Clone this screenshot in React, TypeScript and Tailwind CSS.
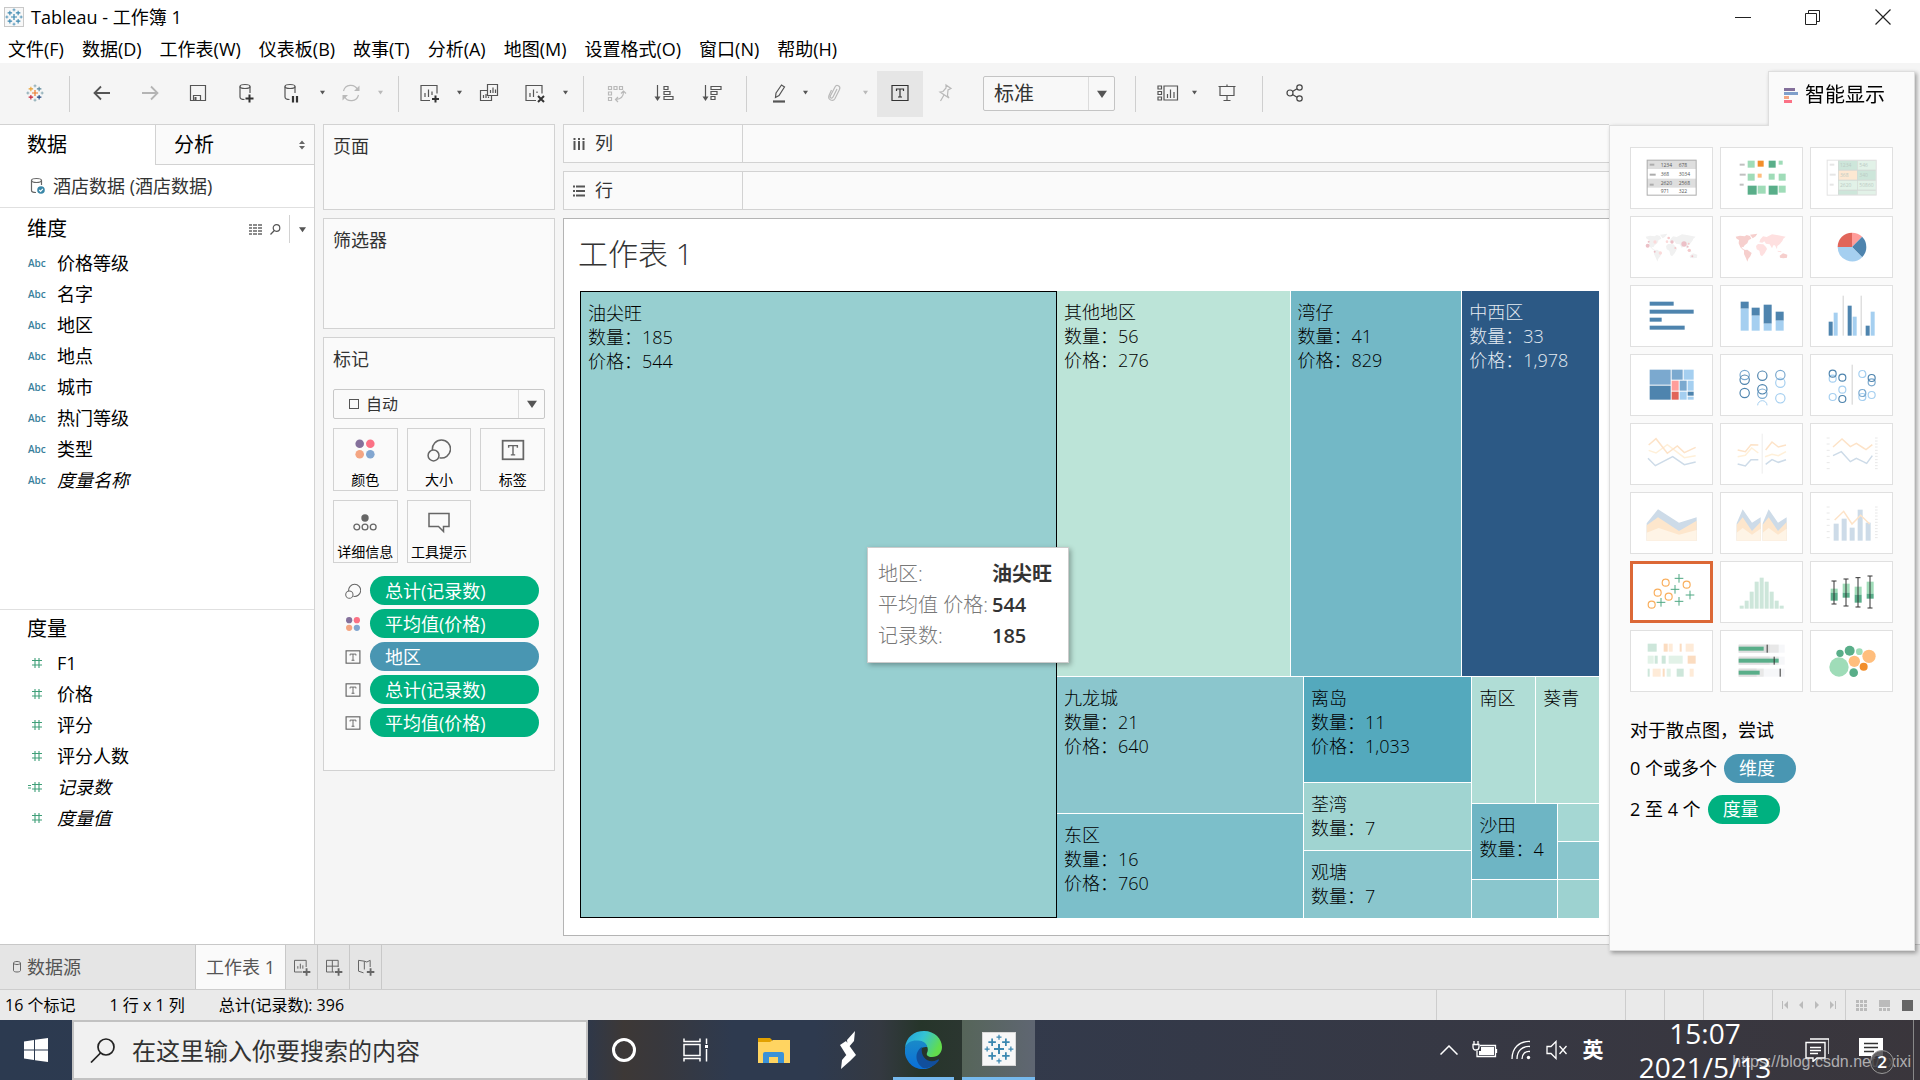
import type { ReactNode } from 'react';

const menus = ['文件(F)', '数据(D)', '工作表(W)', '仪表板(B)', '故事(T)', '分析(A)', '地图(M)', '设置格式(O)', '窗口(N)', '帮助(H)'];

const dimensions = ['价格等级', '名字', '地区', '地点', '城市', '热门等级', '类型', '度量名称'];

const measures = ['F1', '价格', '评分', '评分人数', '记录数', '度量值'];

const pills = [
  { icon: 'size', name: '总计(记录数)', color: 'bg-[#00b180]' },
  { icon: 'color', name: '平均值(价格)', color: 'bg-[#00b180]' },
  { icon: 'label', name: '地区', color: 'bg-[#4996b2]' },
  { icon: 'label', name: '总计(记录数)', color: 'bg-[#00b180]' },
  { icon: 'label', name: '平均值(价格)', color: 'bg-[#00b180]' },
];

/* ---------- icons ---------- */

function Icon({ size = 24, color = '#555', children }: { size?: number; color?: string; children: ReactNode }) {
  return (
    <svg width={size} height={size} viewBox="0 0 24 24" fill="none" stroke={color} strokeWidth="1.2" className="shrink-0">
      {children}
    </svg>
  );
}

function Plus({ x, y, r, color, w = 1.4 }: { x: number; y: number; r: number; color: string; w?: number }) {
  return <path d={`M${x - r} ${y}H${x + r}M${x} ${y - r}V${y + r}`} stroke={color} strokeWidth={w} />;
}

const blueMarks = ['#3a87b0', '#3a87b0', '#3a87b0', '#3a87b0', '#3a87b0', '#3a87b0'];
const colorMarks = ['#eb7a2c', '#e8a030', '#59879b', '#c72035', '#1f447e', '#7199a6'];

function TableauLogo({ size, colors }: { size: number; colors: string[] }) {
  return (
    <svg width={size} height={size} viewBox="0 0 24 24" fill="none">
      <Plus x={12} y={12} r={4} color={colors[0]} w={1.6} />
      <Plus x={6.5} y={6.5} r={3} color={colors[1]} />
      <Plus x={17.5} y={6.5} r={3} color={colors[2]} />
      <Plus x={6.5} y={17.5} r={3} color={colors[3]} />
      <Plus x={17.5} y={17.5} r={3} color={colors[4]} />
      <Plus x={12} y={2.5} r={2} color={colors[5]} w={1} />
      <Plus x={12} y={21.5} r={2} color={colors[5]} w={1} />
      <Plus x={2.5} y={12} r={2} color={colors[5]} w={1} />
      <Plus x={21.5} y={12} r={2} color={colors[5]} w={1} />
    </svg>
  );
}

function Caret({ color = '#555', size = 6 }: { color?: string; size?: number }) {
  return (
    <svg width={size} height={size} viewBox="0 0 6 6" fill={color}>
      <path d="M0 1H6L3 5.4Z" />
    </svg>
  );
}

function ColorDots({ size }: { size: number }) {
  return (
    <svg width={size} height={size} viewBox="0 0 22 22">
      <circle cx="5.7" cy="5.7" r="4.3" fill="#84709b" />
      <circle cx="16.3" cy="5.7" r="4.3" fill="#fb7185" />
      <circle cx="5.7" cy="16.3" r="4.3" fill="#f4a582" />
      <circle cx="16.3" cy="16.3" r="4.3" fill="#82a6d0" />
    </svg>
  );
}

function SizeIcon({ size }: { size: number }) {
  return (
    <svg width={size} height={size} viewBox="0 0 22 22" fill="none" stroke="#666" strokeWidth="1.4">
      <path d="M5 11A8.3 8.3 0 1 1 11.5 18.2" />
      <circle cx="6" cy="16" r="5" />
    </svg>
  );
}

function LabelIcon({ size }: { size: number }) {
  return (
    <svg width={size} height={size} viewBox="0 0 22 22" fill="none" stroke="#666" strokeWidth="1.6">
      <rect x="1.5" y="2.5" width="19" height="17" />
      <path d="M7 9V7H15V9M11 7V15.5M9 15.5H13" strokeWidth="1.3" />
    </svg>
  );
}

function Sep({ className }: { className: string }) {
  return <div className={`h-9 w-px shrink-0 bg-[#cfcfcf] ${className}`} />;
}

function Tool({ label, className, children }: { label: string; className: string; children: ReactNode }) {
  return (
    <button aria-label={label} className={`flex h-[46px] shrink-0 items-center justify-center pb-0.5 ${className}`}>
      {children}
    </button>
  );
}

/* ---------- top bars ---------- */

function TitleBar() {
  return (
    <div className="flex h-[34px] shrink-0 items-center bg-white pl-1">
      <div className="flex size-5 items-center justify-center border border-[#c8c8c8] bg-[#f8f8f8]">
        <TableauLogo size={18} colors={blueMarks} />
      </div>
      <h1 className="ml-[7px] flex-1 text-[18px]">Tableau - 工作簿 1</h1>
      <div className="mr-0.5 flex">
        <button aria-label="最小化" className="flex h-[34px] w-[70px] items-center justify-center">
          <svg width="16" height="16" stroke="#222"><path d="M0 8.5H16" /></svg>
        </button>
        <button aria-label="还原" className="flex h-[34px] w-[70px] items-center justify-center">
          <svg width="16" height="16" fill="none" stroke="#222"><path d="M.5 4.5H11.5V15.5H.5ZM3.5 4V1.5H14.5V12.5H12" /></svg>
        </button>
        <button aria-label="关闭" className="flex h-[34px] w-[70px] items-center justify-center">
          <svg width="16" height="16" fill="none" stroke="#222" strokeWidth="1.2"><path d="M.5 .5L15.5 15.5M15.5 .5L.5 15.5" /></svg>
        </button>
      </div>
    </div>
  );
}

function Toolbar() {
  return (
    <div className="flex h-[61px] shrink-0 items-center bg-[#f5f5f5]">
      <Tool label="起始页" className="w-[69px]"><TableauLogo size={18} colors={colorMarks} /></Tool>
      <Sep className="mr-2" />
      <Tool label="撤消" className="w-12">
        <Icon color="#555"><path d="M20 12H4.500M11 5.500L4.500 12L11 18.500" strokeWidth="1.800" /></Icon>
      </Tool>
      <Tool label="重做" className="w-12">
        <Icon color="#b4b4b4"><path d="M4 12H19.500M13 5.500L19.500 12L13 18.500" strokeWidth="1.800" /></Icon>
      </Tool>
      <Tool label="保存" className="w-12">
        <Icon><path d="M4.500 4.500H19.500V19.500H4.500ZM7.500 19V14.500H14.500V19" /><path d="M9.500 16V19" strokeWidth="2" /></Icon>
      </Tool>
      <Tool label="新建数据源" className="w-12">
        <Icon>
          <ellipse cx="11" cy="5.500" rx="5" ry="2" />
          <path d="M6 5.500V16C6 17.500 8 18.500 10.500 18.500M16 5.500V12" />
          <path d="M11.500 17.500H19.500M15.500 13.500V21.500" stroke="#333" strokeWidth="2" />
        </Icon>
      </Tool>
      <Tool label="暂停自动更新" className="w-11">
        <Icon>
          <ellipse cx="10" cy="5.500" rx="5" ry="2" />
          <path d="M5 5.500V16C5 17.500 7 18.500 9.500 18.500M15 5.500V12" />
          <path d="M13 15V21.500M17 15V21.500" stroke="#333" strokeWidth="2.200" />
        </Icon>
      </Tool>
      <Tool label="更新选项" className="w-4"><Caret size={5} /></Tool>
      <Tool label="刷新" className="w-[42px]">
        <Icon color="#b9b9b9">
          <path d="M4.500 10A7.500 7.500 0 0 1 18.500 8.500M19.500 14A7.500 7.500 0 0 1 5.500 15.500" />
          <path d="M20.500 4.500V10H15ZM3.500 19.500V14H9Z" fill="#b9b9b9" stroke="none" />
        </Icon>
      </Tool>
      <Tool label="刷新选项" className="w-4"><Caret size={5} color="#b9b9b9" /></Tool>
      <Sep className="ml-2.5 mr-2" />
      <Tool label="新建工作表" className="w-11">
        <Icon>
          <path d="M20 12.500V4.500H4V19.500H13M8 16V12M11.500 16V8.500M15 14V10.500" />
          <path d="M15 18H22M18.500 14.500V21.500" stroke="#333" strokeWidth="2" />
        </Icon>
      </Tool>
      <Tool label="工作表选项" className="w-4"><Caret size={5} /></Tool>
      <Tool label="复制" className="w-11">
        <Icon><path d="M10.500 3.500H20.500V14.500H10.500ZM10.500 9.500H3.500V19.500H14.500V14.500M13.500 12V9M16 12V6.500M18.500 12V8.500M6.500 17V14M9 17V13M11.500 17V15.500" /></Icon>
      </Tool>
      <Tool label="清除" className="w-12">
        <Icon>
          <path d="M19 12.500V4.500H3V19.500H13M7 16V12M10.500 16V8.500M14 12V10.500" />
          <path d="M15 15L21 21M21 15L15 21" stroke="#333" strokeWidth="2" />
        </Icon>
      </Tool>
      <Tool label="清除选项" className="w-3"><Caret size={5} /></Tool>
      <Sep className="ml-3 mr-2" />
      <Tool label="交换行和列" className="w-12">
        <Icon color="#b9b9b9">
          <path d="M4.500 5.500H7.500V8.500H4.500ZM10 5.500H13V8.500H10ZM15.500 5.500H18.500V8.500H15.500ZM4.500 11H7.500V14H4.500ZM4.500 16.500H7.500V19.500H4.500ZM19.500 11C19.500 15.500 16.500 18 12 18.500M17 12.500L19.500 10L22 12.500M14 16L11.500 18.500L14 21" />
        </Icon>
      </Tool>
      <Tool label="升序排序" className="w-12">
        <Icon>
          <path d="M5.500 4V17M12 5.500H16V8.500H12ZM12 10.500H18V13.500H12ZM12 15.500H21V18.500H12Z" />
          <path d="M2.500 15.500H8.500L5.500 20Z" fill="#555" stroke="none" />
        </Icon>
      </Tool>
      <Tool label="降序排序" className="w-12">
        <Icon>
          <path d="M5.500 4V17M11 5.500H21V8.500H11ZM11 10.500H17V13.500H11ZM11 15.500H15V18.500H11Z" />
          <path d="M2.500 15.500H8.500L5.500 20Z" fill="#555" stroke="none" />
        </Icon>
      </Tool>
      <Sep className="ml-2.5 mr-3" />
      <Tool label="突出显示" className="w-10">
        <Icon><path d="M9 12L14.500 4L17.500 6L12 14.500L8.500 16.500Z" /><path d="M6 20.500H18" strokeWidth="2.200" /></Icon>
      </Tool>
      <Tool label="突出显示选项" className="w-3"><Caret size={5} /></Tool>
      <Tool label="组成员" className="w-12">
        <Icon color="#b9b9b9"><path d="M14 8L10 16C9 18 6.500 17 7.300 15L12 6C13.500 3 18 5 16.500 8.500L12 17.500C10 21 4.500 19 6 14.500L8.500 9" /></Icon>
      </Tool>
      <Tool label="组选项" className="w-3"><Caret size={5} color="#b9b9b9" /></Tool>
      <Tool label="显示标记标签" className="ml-1.5 w-[46px] bg-[#e6e6e6]">
        <Icon color="#333"><path d="M4 4.500H20V19.500H4ZM8.500 10V8H15.500V10M12 8V16M10 16H14" /></Icon>
      </Tool>
      <Tool label="固定轴" className="w-11">
        <Icon color="#b9b9b9"><path d="M13 4L18 7.500L15 9L14.500 14.500L16 17L7 11L10 10.500L13 7ZM11 14L7.500 20" /></Icon>
      </Tool>
      <div className="relative ml-4 w-[132px] shrink-0">
        <select aria-label="适合" className="h-[35px] w-full appearance-none rounded-xs border border-[#c4c4c4] bg-[#f8f8f8] pl-2.5 text-[20px] text-[#333]">
          <option>标准</option>
        </select>
        <div className="pointer-events-none absolute inset-y-px right-px flex w-[26px] items-center justify-center border-l border-[#dcdcdc]">
          <Caret size={10} />
        </div>
      </div>
      <Sep className="ml-5 mr-3" />
      <Tool label="显示卡" className="w-10">
        <Icon><path d="M2 5H5.500V8H2ZM2 10.500H5.500V13.500H2ZM2 16H5.500V19H2ZM8 5H21.500V19H8ZM11.500 17V13M14.500 17V8.500M18 17V11" /></Icon>
      </Tool>
      <Tool label="显示卡选项" className="w-3"><Caret size={5} /></Tool>
      <Tool label="演示模式" className="w-[54px]">
        <Icon><path d="M3.500 5.500H20.500M5 5.500V14.500H19V5.500M12 3.500V5M12 14.500V19M8.500 19.500H15.500" /></Icon>
      </Tool>
      <Sep className="ml-2 mr-2" />
      <Tool label="共享" className="w-12">
        <Icon color="#444"><circle cx="7" cy="12" r="3" /><circle cx="16.500" cy="6.500" r="2.700" /><circle cx="16.500" cy="17.500" r="2.700" /><path d="M9.500 10.500L14 7.800M9.500 13.500L14 16.200" /></Icon>
      </Tool>
    </div>
  );
}

/* ---------- data pane ---------- */

function DataPane() {
  return (
    <aside className="flex w-[315px] shrink-0 flex-col border-r border-[#d2d2d2] bg-white">
      <div className="flex h-[41px] shrink-0 border-t border-[#d2d2d2] text-[20px]">
        <button className="w-[155px] pl-[27px] text-left">数据</button>
        <button className="flex flex-1 items-center justify-between border-b border-l border-[#d2d2d2] bg-[#fafafa] pl-[18px] pr-2">
          分析
          <svg width="8" height="10" viewBox="0 0 8 10" fill="#666"><path d="M1 4L4 .5L7 4ZM1 6L4 9.500L7 6Z" /></svg>
        </button>
      </div>
      <button className="flex h-[43px] shrink-0 items-center border-b border-[#e0e0e0] pl-[30px] text-[18px] text-[#333]">
        <svg width="16" height="18" viewBox="0 0 16 18" fill="none" stroke="#666" strokeWidth="1.200">
          <ellipse cx="6.500" cy="3.500" rx="5" ry="2" />
          <path d="M1.500 3.500V13.500C1.500 14.500 3 15.500 6 15.500M11.500 3.500V8" />
          <circle cx="11" cy="13" r="3.800" fill="#3a87a8" stroke="none" />
          <path d="M9.300 13L10.600 14.300L12.800 11.800" stroke="#fff" />
        </svg>
        <span className="ml-[7px]">酒店数据 (酒店数据)</span>
      </button>
      <section className="flex-[402]">
        <div className="flex h-10 items-center pl-[27px] pt-0.5">
          <h2 className="flex-1 text-[20px]">维度</h2>
          <button aria-label="查看数据" className="mr-2">
            <svg width="13" height="11" stroke="#666" strokeWidth="1.400"><path d="M0 1H3M4 1H8M9 1H13M0 4H3M4 4H8M9 4H13M0 7H3M4 7H8M9 7H13M0 10H3M4 10H8M9 10H13" /></svg>
          </button>
          <button aria-label="查找字段" className="mr-2">
            <svg width="11" height="11" fill="none" stroke="#555" strokeWidth="1.200"><circle cx="6.500" cy="4" r="3.300" /><path d="M4.300 6.500L.5 10.500" /></svg>
          </button>
          <div className="h-7 w-px bg-[#d2d2d2]" />
          <button aria-label="维度选项" className="flex w-6 justify-center"><Caret size={7} /></button>
        </div>
        <ul className="text-[18px]">
          {dimensions.map((name) => (
            <li key={name} className="flex h-[31px] items-center">
              <span className="w-[57px] pl-7 text-[10px] font-semibold text-[#3a7f9c]">Abc</span>
              <span className={name === '度量名称' ? 'italic' : ''}>{name}</span>
            </li>
          ))}
        </ul>
      </section>
      <section className="flex-[335] border-t border-[#e0e0e0]">
        <h2 className="flex h-[38px] items-center pl-[27px] text-[20px]">度量</h2>
        <ul className="text-[18px]">
          {measures.map((name) => (
            <li key={name} className="flex h-[31px] items-center">
              <span className="w-[57px] pl-7">
                <svg width="15" height="12" viewBox="0 0 15 12" stroke="#3f9f78" strokeWidth="1.100">
                  <path d="M4 3.500H14M4 8H14M7 1V11M11 1V11" />
                  {name === '记录数' && <path d="M0 4.500H3M0 7H3" />}
                </svg>
              </span>
              <span className={name === '记录数' || name === '度量值' ? 'italic' : ''}>{name}</span>
            </li>
          ))}
        </ul>
      </section>
    </aside>
  );
}

/* ---------- cards ---------- */

function Card({ title, className, children }: { title: string; className: string; children?: ReactNode }) {
  return (
    <section className={`border border-[#d2d2d2] bg-[#fafafa] px-[9px] pt-[7px] ${className}`}>
      <h2 className="text-[18px] leading-7 text-[#333]">{title}</h2>
      {children}
    </section>
  );
}

function MarkButton({ name, children }: { name: string; children: ReactNode }) {
  return (
    <button className="flex h-[63px] flex-col items-center justify-between whitespace-nowrap border border-[#d2d2d2] pt-[9px] text-[14px] leading-5">
      {children}
      <span>{name}</span>
    </button>
  );
}

function Cards() {
  return (
    <div className="ml-2 flex w-[232px] shrink-0 flex-col gap-2">
      <Card title="页面" className="h-[86px]" />
      <Card title="筛选器" className="h-[111px]" />
      <Card title="标记" className="pb-[33px]">
        <div className="relative mt-4">
          <select aria-label="标记类型" className="h-[30px] w-full appearance-none rounded-xs border border-[#c8c8c8] pl-8 text-[16px] text-[#333]">
            <option>自动</option>
          </select>
          <div className="pointer-events-none absolute inset-y-0 left-4 flex items-center">
            <svg width="10" height="10" fill="none" stroke="#555"><rect x=".5" y=".5" width="9" height="9" /></svg>
          </div>
          <div className="pointer-events-none absolute inset-y-px right-px flex w-[26px] items-center justify-center border-l border-[#dcdcdc]">
            <Caret size={10} />
          </div>
        </div>
        <div className="mt-[9px] grid grid-cols-3 gap-[9px]">
          <MarkButton name="颜色"><ColorDots size={22} /></MarkButton>
          <MarkButton name="大小"><SizeIcon size={24} /></MarkButton>
          <MarkButton name="标签"><LabelIcon size={24} /></MarkButton>
          <MarkButton name="详细信息">
            <svg width="24" height="24" viewBox="0 0 24 24" fill="none" stroke="#666" strokeWidth="1.300">
              <circle cx="12" cy="8" r="3.700" fill="#666" stroke="none" />
              <circle cx="3.800" cy="17" r="2.900" /><circle cx="12" cy="17" r="2.900" /><circle cx="20.200" cy="17" r="2.900" />
            </svg>
          </MarkButton>
          <MarkButton name="工具提示">
            <svg width="24" height="24" viewBox="0 0 24 24" fill="none" stroke="#666" strokeWidth="1.500"><path d="M2 3.500H22V16.500H16.500V21.500L11.500 16.500H2Z" /></svg>
          </MarkButton>
        </div>
        <ul className="mt-[13px] flex flex-col gap-1 pl-3 pr-1.5">
          {pills.map((pill, i) => (
            <li key={i} className="flex h-[29px] items-center gap-[9px]">
              {pill.icon === 'size' && <SizeIcon size={16} />}
              {pill.icon === 'color' && <ColorDots size={16} />}
              {pill.icon === 'label' && <LabelIcon size={16} />}
              <button className={`h-full flex-1 rounded-full pl-[15px] text-left text-[18px] leading-7 text-white ${pill.color}`}>{pill.name}</button>
            </li>
          ))}
        </ul>
      </Card>
    </div>
  );
}

/* ---------- worksheet ---------- */

function Cell({ name, count, price, className }: { name?: string; count?: string; price?: string; className: string }) {
  return (
    <div className={`min-h-0 min-w-0 overflow-hidden whitespace-nowrap px-[7px] pt-[9px] text-[18px] font-light leading-6 ${className}`}>
      {name && <p>{name}</p>}
      {count && <p>数量：{count}</p>}
      {price && <p>价格：{price}</p>}
    </div>
  );
}

function Treemap() {
  return (
    <div className="grid min-h-0 flex-1 grid-cols-[477fr_542fr]">
      <Cell name="油尖旺" count="185" price="544" className="border border-black bg-[#97cfd0]" />
      <div className="grid min-h-0 grid-rows-[386fr_241fr] gap-px">
        <div className="grid grid-cols-[233fr_171fr_137fr] gap-px">
          <Cell name="其他地区" count="56" price="276" className="bg-[#bce4d8]" />
          <Cell name="湾仔" count="41" price="829" className="bg-[#73b8c6]" />
          <Cell name="中西区" count="33" price="1,978" className="bg-[#2c5985] text-[#e4ebf2]" />
        </div>
        <div className="grid grid-cols-[247fr_168fr_127fr] gap-px">
          <div className="grid grid-rows-[136fr_104fr] gap-px">
            <Cell name="九龙城" count="21" price="640" className="bg-[#8bc6cd]" />
            <Cell name="东区" count="16" price="760" className="bg-[#7cbfca]" />
          </div>
          <div className="grid grid-rows-[105fr_67fr_67fr] gap-px">
            <Cell name="离岛" count="11" price="1,033" className="bg-[#54a9bd]" />
            <Cell name="荃湾" count="7" className="bg-[#a0d4d1]" />
            <Cell name="观塘" count="7" className="bg-[#8ac6cd]" />
          </div>
          <div className="grid grid-rows-[126fr_75fr_38fr] gap-px">
            <div className="grid grid-cols-2 gap-px">
              <Cell name="南区" className="bg-[#b0ddd6]" />
              <Cell name="葵青" className="bg-[#b3dfd6]" />
            </div>
            <div className="grid grid-cols-[84fr_41fr] gap-px">
              <Cell name="沙田" count="4" className="bg-[#6eb5c4]" />
              <div className="grid grid-rows-2 gap-px">
                <div className="bg-[#a5d7d3]" />
                <div className="bg-[#8ac6cd]" />
              </div>
            </div>
            <div className="grid grid-cols-[84fr_41fr] gap-px">
              <div className="bg-[#8ac6cd]" />
              <div className="bg-[#9dd2d0]" />
            </div>
          </div>
        </div>
      </div>
    </div>
  );
}

function Tooltip() {
  return (
    <div className="absolute left-[303px] top-[328px] grid h-[116px] grid-cols-[110px_auto] content-center gap-x-1 border border-[#ccc] bg-white pb-0.5 pl-2.5 pr-4 text-[20px] leading-[31px] shadow-[2px_2px_5px_rgba(0,0,0,0.3)]">
      <span className="whitespace-nowrap font-light text-[#787878]">地区:</span>
      <b className="text-[#333]">油尖旺</b>
      <span className="whitespace-nowrap font-light text-[#787878]">平均值 价格:</span>
      <b className="font-semibold text-[#333]">544</b>
      <span className="whitespace-nowrap font-light text-[#787878]">记录数:</span>
      <b className="font-semibold text-[#333]">185</b>
    </div>
  );
}

function Shelf({ name, children }: { name: string; children: ReactNode }) {
  return (
    <div className="flex h-[39px] shrink-0 border border-r-0 border-[#d2d2d2] bg-[#fafafa]">
      <div className="flex w-[179px] items-center gap-2.5 border-r border-[#d2d2d2] pl-[9px] text-[18px] text-[#333]">
        <svg width="12" height="12" stroke="#555">{children}</svg>
        {name}
      </div>
    </div>
  );
}

function Worksheet() {
  return (
    <main className="ml-2 mr-[311px] flex min-w-0 flex-1 flex-col gap-2 pb-2">
      <Shelf name="列"><path d="M1.500 0V2M6 0V2M10.500 0V2M1.500 3V12M6 3V12M10.500 3V12" strokeWidth="2" /></Shelf>
      <Shelf name="行"><path d="M0 1.500H2M0 6H2M0 10.500H2M3 1.500H12M3 6H12M3 10.500H12" strokeWidth="2" /></Shelf>
      <div className="relative flex min-h-0 flex-1 flex-col border border-r-0 border-[#b4b4b4] bg-white pb-[17px] pl-4 pr-2.5">
        <h2 className="-ml-0.5 flex h-[72px] shrink-0 items-center pb-1 text-[30px] font-light text-[#333]">工作表 1</h2>
        <Treemap />
        <Tooltip />
      </div>
    </main>
  );
}

/* ---------- show me ---------- */

const D = '#4e84ae';
const M = '#7ba9cf';
const L = '#a5cff0';
const G = '#59ae89';
const LG = '#9fdcb8';
const O = '#f28e2b';
const LO = '#ffbe7d';
const paleBlue = '#cddbe8';
const paleOrange = '#fde3c8';
const paleYellow = '#fff0d9';
const paleGreen = '#cde6da';
const paleMint = '#e2f2e8';

type Box = [number, number, number, number, string];
type Dot = [number, number, number, string];

function Boxes({ items }: { items: Box[] }) {
  return <>{items.map(([x, y, w, h, c], i) => <rect key={i} x={x} y={y} width={w} height={h} fill={c} />)}</>;
}

function Dots({ items }: { items: Dot[] }) {
  return <>{items.map(([x, y, r, c], i) => <circle key={i} cx={x} cy={y} r={r} fill={c} />)}</>;
}

function Rings({ items }: { items: Dot[] }) {
  return <>{items.map(([x, y, r, c], i) => <circle key={i} cx={x} cy={y} r={r} fill="none" stroke={c} strokeWidth="3.500" />)}</>;
}

function Lines({ items }: { items: [string, string][] }) {
  return <>{items.map(([points, c], i) => <polyline key={i} points={points} fill="none" stroke={c} strokeWidth="4.500" />)}</>;
}

function Ticks() {
  return <path d="M50 45H59M50 63H59M50 82H59M50 100H59M50 119H59M50 137H59M195 45H203M195 54H203M195 63H203M195 72H203M195 82H203M195 91H203M195 100H203M195 110H203M195 119H203M195 128H203M195 137H203" stroke="#e8e8e8" strokeWidth="3" />;
}

function World({ west, east }: { west: string; east: string }) {
  return (
    <>
      <path d="M47 62L60 59L74 61L80 57L90 60L94 68L86 72L82 82L74 88L70 94L64 92L69 99L77 103L70 103L61 94L56 82L57 72L50 68ZM90 56L112 53L107 61L98 67ZM72 102L82 101L95 111L91 121L85 128L82 137L78 127L72 114ZM179 119L189 112L202 116L201 125L190 127L180 125Z" fill={west} />
      <path d="M118 79L121 70L129 61L140 63L156 55L175 58L197 62L190 68L187 75L179 85L172 90L171 100L165 88L160 88L156 97L149 85L138 83L133 76L127 80ZM108 90L114 84L130 85L138 93L141 99L134 112L126 121L121 117L118 104L110 100ZM172 104L184 106L184 109L174 107Z" fill={east} />
    </>
  );
}

const boxPlots = [
  [72, 60, 83, 95, 119, 129],
  [108, 54, 68, 95, 110, 135],
  [144, 50, 77, 101, 125, 138],
  [180, 45, 62, 98, 113, 141],
];

const charts: { name: string; art: ReactNode }[] = [
  {
    name: '文本表',
    art: (
      <>
        <Boxes items={[[51, 39, 147, 27, '#dedede'], [51, 95, 147, 27, '#dedede'], [59, 50, 14, 6, '#adadad'], [59, 80, 18, 6, '#adadad'], [59, 110, 12, 6, '#adadad']]} />
        <rect x="51.500" y="39.500" width="147" height="105" fill="none" stroke="#adadad" strokeWidth="3" />
        <g fontSize="15" fill="#555">
          <text x="92" y="59">1234</text><text x="146" y="59">678</text>
          <text x="92" y="86">368</text><text x="146" y="86">3034</text>
          <text x="92" y="114">2620</text><text x="146" y="114">2568</text>
          <text x="92" y="137">971</text><text x="146" y="137">322</text>
        </g>
      </>
    ),
  },
  {
    name: '热图',
    art: (
      <Boxes
        items={[
          [59, 50, 15, 6, '#c0c0c0'], [59, 80, 18, 6, '#c0c0c0'], [59, 110, 12, 6, '#c0c0c0'],
          [83, 41, 21, 21, LG], [113, 41, 18, 18, O], [146, 41, 21, 21, G], [176, 41, 12, 12, LG],
          [83, 80, 21, 21, LG], [113, 80, 12, 12, LO], [146, 80, 18, 18, LG], [176, 80, 21, 21, LG],
          [83, 116, 27, 27, G], [113, 116, 24, 24, LG], [146, 116, 27, 27, G], [176, 116, 21, 21, LG],
        ]}
      />
    ),
  },
  {
    name: '突出显示表',
    art: (
      <>
        <Boxes
          items={[
            [84, 39, 115, 105, '#d4d9d6'], [86, 41, 55, 27, paleGreen], [143, 41, 55, 27, paleMint],
            [86, 71, 55, 27, '#fde8d2'], [143, 71, 55, 27, paleGreen], [86, 101, 55, 27, paleMint], [143, 101, 55, 27, paleMint],
            [86, 131, 55, 12, paleGreen], [143, 131, 55, 12, paleMint],
            [59, 50, 14, 6, '#e6e6e6'], [59, 80, 18, 6, '#e6e6e6'], [59, 110, 12, 6, '#e6e6e6'],
          ]}
        />
        <rect x="51.500" y="39.500" width="147" height="105" fill="none" stroke="#e3e3e3" strokeWidth="3" />
        <g fontSize="15" fill="#bccbc4">
          <text x="90" y="59">1234</text><text x="148" y="59">546</text>
          <text x="90" y="90">368</text><text x="148" y="90">340</text>
          <text x="90" y="120">2620</text><text x="148" y="120">50860</text>
        </g>
      </>
    ),
  },
  {
    name: '符号地图',
    art: (
      <>
        <World west="#f1f1f1" east="#f1f1f1" />
        <Dots
          items={[
            [53, 89, 6, '#ecc0c7'], [56, 77, 3, '#ecc0c7'], [75, 78, 5, '#fbdada'], [116, 66, 4, '#f5c9cb'], [111, 77, 4, '#fbdada'],
            [126, 78, 5, '#ecc0c7'], [162, 84, 8, '#ecc0c7'], [176, 83, 3, '#f5c9cb'], [173, 92, 3, '#ecc0c7'], [136, 96, 3, '#f5c9cb'],
            [74, 107, 3, '#ecc0c7'], [91, 111, 5, '#fbdada'], [178, 103, 5, '#f5c9cb'], [187, 121, 3, '#ecc0c7'],
          ]}
        />
      </>
    ),
  },
  { name: '填充地图', art: <World west="#f6cfcd" east="#fee0e0" /> },
  {
    name: '饼图',
    art: (
      <>
        <path d="M126 93V50A43 43 0 0 0 83 93Z" fill="#e1655a" />
        <path d="M126 93V50A43 43 0 0 1 156.400 62.600Z" fill="#ff9d9a" />
        <path d="M126 93L156.400 62.600A43 43 0 0 1 156.400 123.400Z" fill={D} />
        <path d="M126 93L156.400 123.400A43 43 0 0 1 83 93Z" fill={L} />
      </>
    ),
  },
  { name: '水平条', art: <Boxes items={[[59, 50, 72, 12, D], [59, 74, 132, 12, D], [59, 98, 36, 12, D], [59, 122, 105, 12, D]]} /> },
  {
    name: '堆叠条',
    art: (
      <Boxes
        items={[
          [62, 50, 24, 21, D], [62, 71, 24, 66, L], [95, 68, 24, 24, D], [95, 92, 24, 45, L],
          [131, 59, 24, 57, D], [131, 116, 24, 21, L], [167, 80, 24, 27, D], [167, 107, 24, 30, L],
        ]}
      />
    ),
  },
  {
    name: '并排条',
    art: (
      <Boxes
        items={[
          [98, 32, 3, 120, '#d0d0d0'], [152, 32, 3, 120, '#d0d0d0'],
          [56, 110, 12, 42, D], [71, 83, 12, 69, L], [113, 62, 12, 90, D], [128, 95, 12, 57, L], [167, 122, 12, 30, D], [182, 80, 12, 72, L],
        ]}
      />
    ),
  },
  {
    name: '树状图',
    art: (
      <Boxes
        items={[
          [59, 47, 63, 45, M], [59, 95, 63, 42, D], [125, 47, 33, 30, M], [161, 47, 30, 30, L],
          [125, 80, 21, 30, '#ff9d9a'], [149, 80, 21, 30, M], [173, 80, 18, 30, L],
          [125, 113, 21, 24, '#e1655a'], [149, 113, 21, 24, L], [173, 113, 18, 12, D], [173, 128, 18, 9, L],
        ]}
      />
    ),
  },
  {
    name: '圆视图',
    art: (
      <>
        <Rings items={[[74, 63, 14, M], [74, 77, 14, D], [74, 117, 14, D], [127, 65, 14, D], [127, 119, 14, M], [127, 106, 14, D], [181, 86, 14, L], [181, 63, 14, M], [181, 133, 14, L]]} />
        <path d="M113 154A14 14 0 0 1 141 154" fill="none" stroke={L} strokeWidth="3" />
      </>
    ),
  },
  {
    name: '并排圆',
    art: (
      <>
        <Boxes items={[[125, 32, 3, 120, '#d0d0d0']]} />
        <Rings
          items={[
            [68, 74, 10.5, L], [68, 59, 10.5, D], [97, 71, 10.5, D], [97, 107, 10.5, L], [97, 135, 10.5, D], [68, 129, 10.5, L],
            [157, 60, 10.5, L], [185, 85, 10.5, M], [185, 72, 10.5, D], [157, 129, 10.5, L], [157, 117, 10.5, M], [185, 123, 10.5, L],
          ]}
        />
      </>
    ),
  },
  {
    name: '连续线',
    art: <Lines items={[['56,82 78,90 112,65 163,104 197,98', paleYellow], ['56,66 78,47 112,91 142,69 163,89 197,73', paleOrange], ['54,106 76,128 128,101 163,125 197,117', paleBlue]]} />,
  },
  {
    name: '离散线',
    art: (
      <>
        <Boxes items={[[125, 32, 3, 120, '#ececec']]} />
        <Lines
          items={[
            ['53,101 76,97 95,75 115,90', paleYellow], ['53,81 76,86 93,65 115,66', paleOrange], ['53,123 76,129 93,110 115,110', paleBlue],
            ['135,101 156,94 175,98 198,86', paleYellow], ['137,81 156,57 175,72 198,66', paleOrange], ['137,124 156,110 175,118 198,110', paleBlue],
          ]}
        />
      </>
    ),
  },
  {
    name: '双线',
    art: (
      <>
        <Ticks />
        <Lines items={[['69,72 96,48 121,71 139,61 168,80 187,65', paleOrange], ['69,98 94,86 121,116 139,106 170,121 187,98', paleBlue]]} />
      </>
    ),
  },
  {
    name: '连续区域图',
    art: (
      <>
        <path d="M50 94L84 52L147 92L200 76V146H50Z" fill={paleBlue} />
        <path d="M50 100L84 76L147 117L200 86V146H50Z" fill="#fde6cc" />
        <path d="M50 122L86 108L147 128L200 114V146H50Z" fill="#fef4e6" />
      </>
    ),
  },
  {
    name: '离散区域图',
    art: (
      <>
        {[0, 78].map((x) => (
          <g key={x} transform={`translate(${x} 0)`}>
            <path d="M50 94L68 52L96 92L122 76V146H50Z" fill={paleBlue} />
            <path d="M50 98L68 76L96 117L122 90V146H50Z" fill="#fde6cc" />
            <path d="M50 122L68 108L96 128L122 110V146H50Z" fill="#fef4e6" />
          </g>
        ))}
      </>
    ),
  },
  {
    name: '双组合',
    art: (
      <>
        <Ticks />
        <Boxes items={[[71, 95, 15, 51, paleBlue], [95, 80, 15, 66, paleBlue], [119, 107, 15, 39, paleBlue], [143, 53, 15, 93, paleBlue], [167, 92, 15, 54, paleBlue]]} />
        <Lines items={[['74,84 101,58 126,96 152,70 179,96', paleOrange]]} />
      </>
    ),
  },
  {
    name: '散点图',
    art: (
      <>
        <Rings items={[[107, 65, 10.5, '#f9ae5c'], [170, 71, 10.5, '#f9ae5c'], [83, 95, 10.5, '#f9ae5c'], [116, 107, 10.5, '#f9ae5c'], [65, 131, 10.5, '#f9ae5c']]} />
        <Plus x={147} y={52} r={13} color="#4fa883" w={3} />
        <Plus x={135} y={85} r={13} color="#4fa883" w={3} />
        <Plus x={180} y={102} r={13} color="#4fa883" w={3} />
        <Plus x={93} y={124} r={13} color="#4fa883" w={3} />
        <Plus x={147} y={121} r={13} color="#4fa883" w={3} />
      </>
    ),
  },
  {
    name: '直方图',
    art: <Boxes items={[134, 119, 92, 62, 50, 62, 92, 119, 134].map((y, i): Box => [59 + i * 15, y, 12, 143 - y, paleGreen])} />,
  },
  {
    name: '盒须图',
    art: (
      <>
        {boxPlots.map(([x, top, q1, mid, q3, bottom]) => (
          <g key={x}>
            <rect x={x - 10} y={q1} width="21" height={mid - q1} fill={LG} />
            <rect x={x - 10} y={mid} width="21" height={q3 - mid} fill={G} />
            <path d={`M${x - 7.5} ${top}H${x + 7.5}M${x} ${top}V${bottom}M${x - 7.5} ${bottom}H${x + 7.5}`} stroke="#333" strokeWidth="3" />
          </g>
        ))}
      </>
    ),
  },
  {
    name: '甘特图',
    art: (
      <Boxes
        items={[
          [53, 41, 27, 24, paleGreen], [101, 41, 12, 24, '#fbdcc0'], [116, 41, 12, 24, '#feebd8'], [149, 41, 6, 24, '#fbdcc0'], [167, 41, 24, 24, '#feebd8'],
          [53, 77, 18, 24, paleMint], [74, 77, 9, 24, paleGreen], [95, 77, 12, 24, paleGreen], [116, 77, 42, 24, paleMint], [173, 77, 24, 24, '#fbdcc0'],
          [53, 116, 6, 24, paleGreen], [68, 116, 24, 24, '#feebd8'], [98, 116, 6, 24, '#fbdcc0'], [110, 116, 12, 24, paleMint], [140, 116, 21, 24, paleGreen], [179, 116, 12, 24, '#feebd8'],
        ]}
      />
    ),
  },
  {
    name: '靶心图',
    art: (
      <Boxes
        items={[
          [56, 44, 138, 24, '#f6f7f9'], [56, 44, 120, 24, '#e8e8e8'], [56, 44, 93, 24, '#dedede'], [56, 50, 75, 12, G], [140, 44, 3, 24, '#333'],
          [56, 80, 138, 24, '#f6f7f9'], [56, 80, 120, 24, '#e8e8e8'], [56, 80, 93, 24, '#dedede'], [56, 86, 120, 12, G], [161, 80, 3, 24, '#333'],
          [56, 116, 138, 24, '#f6f7f9'], [56, 116, 75, 24, '#e8e8e8'], [56, 116, 54, 24, '#dedede'], [56, 122, 63, 12, G], [179, 116, 3, 24, '#333'],
        ]}
      />
    ),
  },
  {
    name: '填充气泡图',
    art: <Dots items={[[87, 111, 29, LG], [90, 70, 11, G], [119, 62, 15, G], [148, 65, 10, LG], [177, 79, 20, LO], [133, 94, 17, LO], [161, 110, 12, O], [131, 128, 13, G]]} />,
  },
];

// floats over the toolbar, the sheet and the tab strip
function ShowMe() {
  return (
    <div className="absolute right-[5px] top-[71px] flex flex-col items-end drop-shadow-[2px_2px_2px_rgba(0,0,0,0.35)]">
      <button className="relative z-10 flex h-[55px] w-[147px] items-center border border-b-0 border-[#dedede] bg-[#fafafa] pb-2 pl-[15px] text-[20px]">
        <svg width="14" height="15" className="mr-[7px]">
          <path d="M0 0H11V3H0Z" fill="#84709b" />
          <path d="M0 4H14V7H0Z" fill="#7f9fca" />
          <path d="M0 8H5V11H0Z" fill="#f4a582" />
          <path d="M0 12H8V15H0Z" fill="#fb7185" />
        </svg>
        智能显示
      </button>
      <div className="-mt-px h-[826px] w-[306px] border border-[#dedede] bg-[#fafafa] px-5 pt-[21px]">
        <div className="grid grid-cols-[83px_83px_83px] gap-[7px]">
          {charts.map(({ name, art }) => (
            <button
              key={name}
              aria-label={name}
              className={`h-[62px] border bg-white ${name === '散点图' ? 'border-[#dc6836] ring-2 ring-inset ring-[#dc6836]' : 'border-[#e0e0e0]'}`}
            >
              <svg viewBox="3 3 243 180" className="size-full">{art}</svg>
            </button>
          ))}
        </div>
        <div className="mt-6 text-[18px]">
          <p className="leading-[28px]">对于散点图，尝试</p>
          <p className="mt-2.5 flex items-center gap-[7px] leading-[29px]">
            0 个或多个
            <span className="w-[72px] rounded-full bg-[#4996b2] pl-[15px] text-white">维度</span>
          </p>
          <p className="mt-3 flex items-center gap-[7px] leading-[29px]">
            2 至 4 个
            <span className="w-[72px] rounded-full bg-[#00b180] pl-[15px] text-white">度量</span>
          </p>
        </div>
      </div>
    </div>
  );
}

/* ---------- bottom bars ---------- */

function SheetTabs() {
  return (
    <div className="flex h-[45px] shrink-0 border-t border-[#c8c8c8] bg-[#e5e5e5] text-[18px] text-[#555]">
      <button className="flex w-[195px] items-center pl-3">
        <svg width="10" height="14" fill="none" stroke="#666"><path d="M1.500 3V10.500C1.500 12.500 8.500 12.500 8.500 10.500V3C8.500 1 1.500 1 1.500 3C1.500 5 8.500 5 8.500 3" /></svg>
        <span className="ml-[5px]">数据源</span>
      </button>
      <button className="w-[91px] border-x border-[#c8c8c8] bg-[#fafafa]">工作表 1</button>
      <button aria-label="新建工作表" className="flex w-8 items-center justify-center border-r border-[#c8c8c8]">
        <Icon size={20} color="#666"><path d="M17 12V4H3V18H12M7 14V11M10 14V8M13 14V10" /><path d="M13 18H22M17.500 13.500V22.500" strokeWidth="2.200" /></Icon>
      </button>
      <button aria-label="新建仪表板" className="flex w-8 items-center justify-center border-r border-[#c8c8c8]">
        <Icon size={20} color="#666"><path d="M17 12V4H3V18H12M3 11H17M10 4V18" /><path d="M13 18H22M17.500 13.500V22.500" strokeWidth="2.200" /></Icon>
      </button>
      <button aria-label="新建故事" className="flex w-8 items-center justify-center border-r border-[#c8c8c8]">
        <Icon size={20} color="#666"><path d="M17 12V4L13 6L10 5L3 4V17L9 19M10 5V15" /><path d="M13 18H22M17.500 13.500V22.500" strokeWidth="2.200" /></Icon>
      </button>
    </div>
  );
}

function StatusBar() {
  return (
    <div className="flex h-[31px] shrink-0 items-stretch border-t border-[#cdcdcd] bg-[#eaeaea] pl-[5px] text-[16px] leading-[30px]">
      <span className="mr-[34px]">16 个标记</span>
      <span className="mr-[34px]">1 行 x 1 列</span>
      <span className="flex-1">总计(记录数): 396</span>
      <div className="w-[189px] border-l border-[#cdcdcd]" />
      <div className="w-[39px] border-l border-[#cdcdcd]" />
      <div className="w-[39px] border-l border-[#cdcdcd]" />
      <div className="w-[69px] border-l border-[#cdcdcd]" />
      <div className="flex w-[73px] items-center justify-around border-l border-[#cdcdcd] px-1">
        <svg width="8" height="8" fill="#bbb"><path d="M1 0H2V8H1ZM7 0V8L3 4Z" /></svg>
        <svg width="8" height="8" fill="#bbb"><path d="M6 0V8L2 4Z" /></svg>
        <svg width="8" height="8" fill="#bbb"><path d="M2 0V8L6 4Z" /></svg>
        <svg width="8" height="8" fill="#bbb"><path d="M1 0V8L5 4ZM6 0H7V8H6Z" /></svg>
      </div>
      <div className="flex w-[75px] items-center gap-3 border-l border-[#cdcdcd] pl-2.5">
        <svg width="11" height="11" fill="#bbb"><path d="M0 0H3V3H0ZM4 0H7V3H4ZM8 0H11V3H8ZM0 4H3V7H0ZM4 4H7V7H4ZM8 4H11V7H8ZM0 8H3V11H0ZM4 8H7V11H4ZM8 8H11V11H8Z" /></svg>
        <svg width="11" height="11" fill="#bbb"><path d="M0 0H11V7H0ZM0 8H3V11H0ZM4 8H7V11H4ZM8 8H11V11H8Z" /></svg>
        <svg width="11" height="11" fill="#666"><path d="M0 0H11V11H0Z" /></svg>
      </div>
    </div>
  );
}

function Taskbar() {
  return (
    <div className="relative flex h-15 shrink-0 bg-linear-to-r from-[#2c3a50] via-[#323a4c] to-[#3a363c] text-white">
      <button aria-label="开始" className="flex w-[72px] items-center justify-center">
        <svg width="24" height="24" fill="#fff"><path d="M0 3.500L10 2V11.500H0ZM11 1.800L24 0V11.500H11ZM0 12.500H10V22L0 20.500ZM11 12.500H24V24L11 22.200Z" /></svg>
      </button>
      <label className="flex w-[516px] items-center border-2 border-[#c2c2c2] bg-[#f1f1f1] pl-4">
        <svg width="25" height="25" fill="none" stroke="#222" strokeWidth="1.700"><circle cx="16" cy="9" r="8" /><path d="M10.500 15L1 24.500" /></svg>
        <input placeholder="在这里输入你要搜索的内容" aria-label="搜索" className="ml-[17px] min-w-0 flex-1 pt-0.5 text-[24px] outline-none placeholder:text-[#333]" />
      </label>
      <button aria-label="Cortana" className="flex w-[72px] items-center justify-center bg-linear-to-r from-[#2f3849] via-[#3d3836] to-[#38383d]">
        <svg width="26" height="26" fill="none" stroke="#fff" strokeWidth="3"><circle cx="13" cy="13" r="10.500" /></svg>
      </button>
      <button aria-label="任务视图" className="flex w-[72px] items-center justify-center bg-linear-to-r from-[#38383d] to-[#2e3a4f]">
        <svg width="26" height="24" fill="none" stroke="#fff" strokeWidth="1.500"><path d="M1 .5V3.500H17V.5M1 6.500H17V17.500H1ZM1 23.500V20.500H17V23.500M23.500 .5V6M23.500 11V23.500" /><path d="M22 7H25V10H22Z" fill="#fff" stroke="none" /></svg>
      </button>
      <button aria-label="文件资源管理器" className="flex w-[83px] items-center justify-center bg-[#2e3a4f]">
        <svg width="32" height="26"><path d="M0 1H12L14 3V6H0Z" fill="#e2a100" /><path d="M0 5H12L15 3H32V26H0Z" fill="#ffd461" /><path d="M5 27V17Q5 15 7 15H24Q26 15 26 17V27H20V20H11V27Z" fill="#3b92d8" /></svg>
      </button>
      <button aria-label="应用" className="flex w-[65px] items-center justify-center bg-linear-to-r from-[#2e3a4f] to-[#343941]">
        <svg width="16" height="38" fill="#fff"><path d="M15 0L14 10L8 17L7 9ZM6 10L16 24L10 30L0 14ZM1 38L2 29L8 22L10 30Z" /></svg>
      </button>
      <div className="flex bg-linear-to-r from-[#343941] via-[#26352a] to-[#2b3630] pl-[13px] pr-2">
        <button aria-label="Microsoft Edge" className="flex w-[61px] items-center justify-center border-b-3 border-[#76b9ed]">
          <svg width="37" height="38" viewBox="0 0 37 38" className="mt-0.5">
            <defs>
              <linearGradient id="edgeTop" x1="0" y1="0" x2="1" y2=".4"><stop offset="0" stopColor="#229fdc" /><stop offset=".5" stopColor="#34c3d5" /><stop offset="1" stopColor="#62dd4c" /></linearGradient>
              <linearGradient id="edgeSide" x1="0" y1="0" x2="0" y2="1"><stop offset="0" stopColor="#1a8ac8" /><stop offset="1" stopColor="#0a6fd8" /></linearGradient>
            </defs>
            <path d="M0 17C1 6 9 0 19 0C30 0 37 8 37 16C37 22 33 26 27 26C23 26 21 24 22 22C25 17 20 10 13 10C7 10 2 13 0 17Z" fill="url(#edgeTop)" />
            <path d="M0 17C2 11 7 9 13 9.500C19 10 22 13 22 16C15 15 11 22 15 29C18 35 26 35 30 32C25 41 9 40 3 30C0 26 -.5 21 0 17Z" fill="url(#edgeSide)" />
            <path d="M17 16C10 20 9 31 18 37C25 38 32 33 34 29C34 28 33 28 32 29C24 33 15 27 17 16Z" fill="#114f9c" />
          </svg>
        </button>
      </div>
      <button aria-label="Tableau" className="flex w-[73px] items-center justify-center border-b-3 border-[#76b9ed] bg-linear-to-r from-[#566559] to-[#5f6672]">
        <div className="flex size-[34px] items-center justify-center border border-[#d8d8d8] bg-[#f7f7f7]"><TableauLogo size={30} colors={blueMarks} /></div>
      </button>
      <div className="flex flex-1 items-center justify-end">
        <button aria-label="显示隐藏的图标" className="flex w-9 justify-center">
          <svg width="18" height="10" fill="none" stroke="#fff" strokeWidth="1.500"><path d="M.5 9.500L9 1L17.500 9.500" /></svg>
        </button>
        <button aria-label="电源" className="flex w-9 justify-center">
          <svg width="26" height="20" fill="none" stroke="#fff" strokeWidth="1.300"><path d="M8 5.500H23.500V16.500H5V11M24.500 9V13M2 1V4M6 1V4M1 4.500H7V7C7 9 6 10 4 10C2 10 1 9 1 7Z" /><path d="M9 7H22V15H7V11H9Z" fill="#fff" stroke="none" /></svg>
        </button>
        <button aria-label="网络" className="flex w-9 justify-center">
          <svg width="20" height="20" fill="none" stroke="#fff" strokeWidth="1.300"><path d="M1 19C1 8 8 1 19 1.500M6 19C6 11 11 6 19 6.500M11 19C11 14 14 11 19 11.500" /><circle cx="17.500" cy="17.500" r="1.700" fill="#fff" stroke="none" /></svg>
        </button>
        <button aria-label="音量" className="flex w-9 justify-center">
          <svg width="22" height="20" fill="none" stroke="#fff" strokeWidth="1.300"><path d="M1 6.500H5L10 1.500V18.500L5 13.500H1ZM13.500 6L20.500 14M20.500 6L13.500 14" /></svg>
        </button>
        <button className="w-9 text-[21px] font-semibold">英</button>
        <time className="ml-[26px] w-[136px] text-center text-[28px] leading-[34px]">
          15:07
          <br />
          2021/5/13
        </time>
        <button aria-label="通知" className="ml-8 flex w-6">
          <svg width="25" height="24" fill="none" stroke="#fff" strokeWidth="1.400"><path d="M5 1H24V16M1 4.500H20V20H12L8 23.500V20H1ZM5 9.500H16M5 12.500H16M5 15.500H13" /></svg>
        </button>
        <button aria-label="操作中心" className="ml-[30px] flex w-6">
          <svg width="25" height="24"><path d="M0 0H24V18H17L12 23V18H0Z" fill="#fff" /><path d="M5 5.500H19M5 9.500H19M5 13.500H15" stroke="#333" strokeWidth="1.300" /></svg>
        </button>
        <div className="ml-[30px] mr-[6px] h-full w-px bg-[#888]" />
      </div>
      <span className="absolute bottom-2 right-[9px] font-['Liberation_Sans',sans-serif] text-[16px] leading-5 text-white/60">https://blog.csdn.net/zxixi</span>
      <span className="absolute bottom-1.5 right-[26px] flex size-6 items-center justify-center rounded-full border border-[#999] bg-[#3c3a3c]/80 text-[17px] font-semibold">2</span>
    </div>
  );
}

export default function App() {
  return (
    <div className="relative flex h-screen min-h-[1000px] w-full flex-col overflow-hidden bg-[#f5f5f5] font-['Open_Sans','Noto_Sans_CJK_SC',sans-serif] text-black">
      <TitleBar />
      <nav className="flex h-[29px] shrink-0 items-center gap-[18px] bg-white pl-2 pt-px text-[18px]">
        {menus.map((menu) => (
          <button key={menu} className="whitespace-nowrap">{menu}</button>
        ))}
      </nav>
      <Toolbar />
      <div className="flex min-h-0 flex-1">
        <DataPane />
        <Cards />
        <Worksheet />
      </div>
      <SheetTabs />
      <StatusBar />
      <Taskbar />
      <ShowMe />
    </div>
  );
}
